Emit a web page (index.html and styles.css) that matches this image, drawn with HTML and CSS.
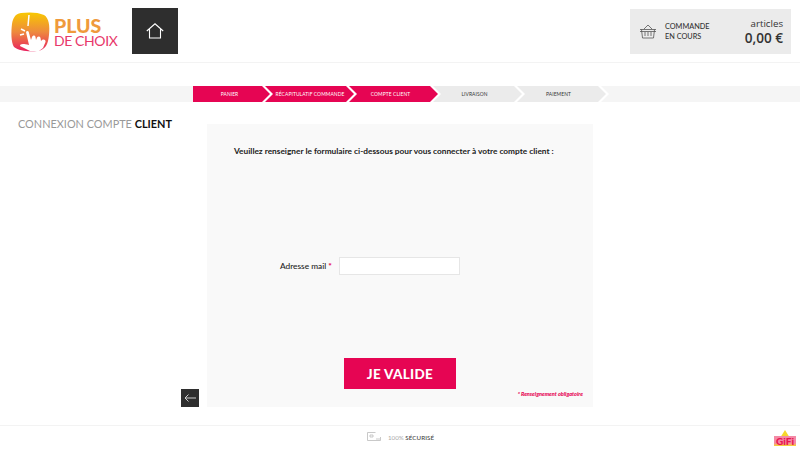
FILE: index.html
```html
<!DOCTYPE html>
<html lang="fr">
<head>
<meta charset="utf-8">
<title>Connexion compte client</title>
<link rel="stylesheet" href="styles.css">
</head>
<body>
<header class="top">
  <div class="brand">
    <svg class="mark" width="39" height="40" viewBox="0 0 39 40">
      <defs><linearGradient id="lg" x1="0" y1="0" x2="0" y2="1"><stop offset="0" stop-color="#f8c800"/><stop offset=".5" stop-color="#ee8a3e"/><stop offset="1" stop-color="#e8205e"/></linearGradient></defs>
      <path d="M10 1C17 0 27 0 33 3C38 6 39 14 38 23C37 32 35 38 26 39C18 40 8 39 3 35C0 30 0 20 1 12C2 6 4 2 10 1Z" fill="url(#lg)"/>
      <path d="M15 20C16 18 18 19 18 21L20 28L21 25C22 23 24 23 24.5 25L25 28L26 25.5C27 24 29 24 29.5 26L30 29L31 28C33 27 35 28 34.5 30L32 36L28 39L19 39L9 34C9 32 11 31 18 33Z" fill="#fff"/>
      <path d="M18 3L17 14M10 17L14 19M9 23L13 22" stroke="#fff" stroke-width="1.5" fill="none"/>
    </svg>
    <div class="wordmark"><b>PLUS</b><span>DE CHOIX</span></div>
  </div>
  <a class="home">
    <svg width="18" height="16" viewBox="0 0 18 16" fill="none" stroke="#fff" stroke-width="1.1"><path d="M.8 8L9 .8L17.2 8M3.5 6.2V15H14.5V6.2"/></svg>
  </a>
  <div class="cart">
    <svg class="basket" width="18" height="15" viewBox="0 0 18 15" fill="none" stroke="#555" stroke-width=".8"><path d="M1 5.5H17M2.5 5.5L3.5 14H14.5L15.5 5.5M5 5L9 1L13 5M6 8V12M9 8V12M12 8V12M1 7.5H17"/></svg>
    <div class="cart-label">COMMANDE<br>EN COURS</div>
    <div class="cart-total"><span class="art">articles</span><strong>0,00 €</strong></div>
  </div>
</header>

<nav class="steps">
  <div class="track">
    <div class="step first on">PANIER</div>
    <div class="step recap on">RÉCAPITULATIF COMMANDE</div>
    <div class="step on">COMPTE CLIENT</div>
    <div class="step todo">LIVRAISON</div>
    <div class="step todo">PAIEMENT</div>
    <div class="step end"></div>
  </div>
</nav>

<main class="main">
  <aside class="side">
    <h1 class="title">CONNEXION COMPTE <b>CLIENT</b></h1>
    <a class="back">
      <svg width="12" height="8" viewBox="0 0 12 8" fill="none" stroke="#ccc" stroke-width="1"><path d="M12 4H1M4.5 .5L1 4L4.5 7.5"/></svg>
    </a>
  </aside>
  <section class="panel">
    <p class="intro">Veuillez renseigner le formulaire ci-dessous pour vous connecter à votre compte client :</p>
    <div class="field">
      <label class="lab">Adresse mail <em>*</em></label>
      <input class="inp" type="text">
    </div>
    <button class="go">JE VALIDE</button>
    <p class="req">* Renseignement obligatoire</p>
  </section>
</main>

<footer class="foot">
  <div class="secure">
    <svg width="14" height="10" viewBox="0 0 14 10" fill="none" stroke="#bbb" stroke-width=".8"><path d="M.5.5H8.5M.5.5V8.5H13.5V5M3 3H6V5H3ZM9 7L13 7"/></svg>
    <span>100% <b>SÉCURISÉ</b></span>
  </div>
  <div class="gifi"><i class="tri"></i><span>GiFi</span></div>
</footer>
</body>
</html>
```
FILE: styles.css
```css
* { box-sizing: border-box; }
html, body { margin: 0; padding: 0; }
body { width: 800px; height: 450px; overflow: hidden; background: #fff; font-family: "Lato", sans-serif; color: #222; }

.top { height: 63px; border-bottom: 1px solid #f3f3f3; display: flex; align-items: flex-start; padding: 8px 9px 0 11px; }
.brand { width: 121px; height: 46px; display: flex; align-items: center; gap: 4px; }
.mark { flex: none; margin-top: 2px; }
.wordmark { display: flex; flex-direction: column; margin-top: 3px; }
.wordmark b { font-weight: 900; font-size: 19.5px; line-height: 16px; color: #ef9a3c; }
.wordmark span { color: #e8386a; font-size: 14px; line-height: 14px; letter-spacing: -.4px; white-space: nowrap; }
.home { width: 46px; height: 46px; background: #2e2e2e; display: flex; align-items: center; justify-content: center; }
.cart { margin-left: auto; margin-top: 1px; width: 161px; height: 45px; background: #ebebeb; display: flex; align-items: center; padding: 0 8px 0 9px; }
.basket { flex: none; }
.cart-label { font-size: 7.3px; line-height: 9.5px; margin-left: 8px; color: #333; font-weight: 500; }
.cart-total { margin-left: auto; display: flex; flex-direction: column; align-items: flex-end; font-family: "Open Sans", sans-serif; color: #333; }
.art { font-size: 9.7px; line-height: 13px; margin-bottom: -1px; }
.cart-total strong { font-weight: 600; font-size: 13.6px; line-height: 17px; }

.steps { margin-top: 23px; height: 16px; background: #f5f5f5; display: flex; padding-left: 193px; }
.track { display: flex; background: #fff; }
.step { width: 89px; height: 16px; margin-right: -5px; display: flex; align-items: center; justify-content: center; font-size: 4.9px; letter-spacing: .1px; padding-right: 6px; clip-path: polygon(0 0, calc(100% - 8px) 0, 100% 50%, calc(100% - 8px) 100%, 0 100%, 8px 50%); white-space: nowrap; }
.step.first { width: 77px; padding-right: 4px; clip-path: polygon(0 0, calc(100% - 8px) 0, 100% 50%, calc(100% - 8px) 100%, 0 100%); }
.step.recap { padding: 0 0 0 1px; }
.on { background: #e60553; color: #fff; }
.todo { background: #ebebeb; color: #333; }
.step.end { background: #f5f5f5; width: 22px; margin-right: 0; padding: 0; clip-path: polygon(0 0, 100% 0, 100% 100%, 0 100%, 8px 50%); }

.main { display: flex; margin-top: 22px; height: 283px; }
.side { width: 207px; display: flex; flex-direction: column; justify-content: space-between; padding: 0 8px 0 18px; }
.title { margin: -7px 0 0; font-size: 10.9px; line-height: 14px; font-weight: 400; color: #999; white-space: nowrap; }
.title b { color: #111; font-weight: 700; }
.back { align-self: flex-end; width: 18px; height: 18px; background: #2e2e2e; display: flex; align-items: center; justify-content: center; }
.panel { width: 386px; background: #f9f9f9; display: flex; flex-direction: column; padding: 22px 10px 0 27px; }
.intro { margin: 0; font-size: 8.3px; line-height: 11px; font-weight: 700; color: #222; white-space: nowrap; }
.field { display: flex; align-items: center; margin-top: 100px; padding-left: 46px; height: 18px; }
.lab { font-size: 8.3px; font-weight: 500; color: #222; width: 59px; white-space: nowrap; }
.lab em { color: #e60553; font-style: normal; font-weight: 900; }
.inp { width: 121px; height: 18px; background: #fff; border: 1px solid #e6e6e6; outline: 0; padding: 0; }
.go { align-self: flex-start; margin: 83px 0 0 110px; width: 112px; height: 31px; border: 0; background: #e60553; color: #fff; font-family: "Lato", sans-serif; font-weight: 900; font-size: 13.5px; letter-spacing: .3px; padding: 0; }
.req { margin: 0; padding-top: 1px; align-self: flex-end; font-size: 5.5px; line-height: 8px; font-style: italic; font-weight: 900; color: #e60553; white-space: nowrap; }

.foot { margin-top: 18px; height: 25px; border-top: 1px solid #f3f3f3; display: flex; align-items: flex-start; justify-content: space-between; padding: 4px 4px 0 367px; }
.secure { display: flex; align-items: center; gap: 7px; font-size: 6.2px; color: #aaa; height: 14px; }
.secure b { color: #444; font-weight: 500; letter-spacing: .1px; }
.gifi { position: relative; width: 22px; height: 16px; }
.tri { position: absolute; left: 6px; top: 0; width: 0; height: 0; border: 5px solid transparent; border-top: 0; border-bottom: 8px solid #f6d72b; }
.gifi span { position: absolute; left: 0; bottom: 0; width: 22px; height: 10px; background: linear-gradient(#f48aa6, #f48aa6 70%, #f6d72b); color: #e8144e; font-size: 10px; line-height: 10px; font-weight: 900; text-align: center; }
```
